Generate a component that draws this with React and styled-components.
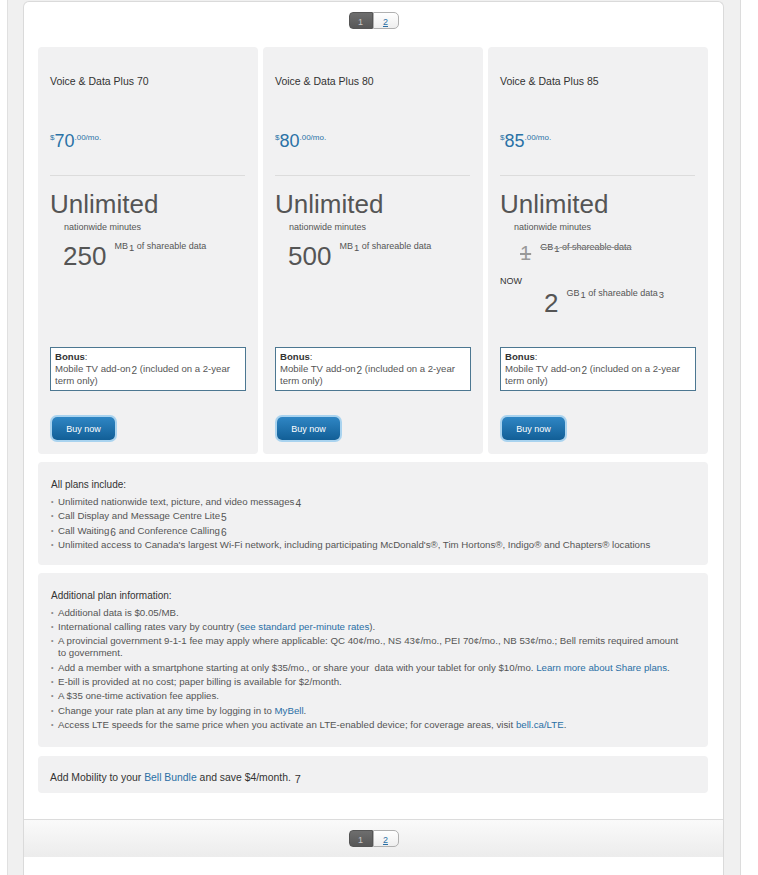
import React from 'react';
import styled, { createGlobalStyle } from 'styled-components';

const GlobalStyle = createGlobalStyle`
    html, body {
        margin: 0;
        padding: 0;
        background: #fff;
        font-family: 'Liberation Sans', Arial, sans-serif;
        color: #555;
    }
`;

const plans = [
    { name: 'Voice & Data Plus 70', price: '70', data: '250', unit: 'MB' },
    { name: 'Voice & Data Plus 80', price: '80', data: '500', unit: 'MB' },
    { name: 'Voice & Data Plus 85', price: '85', data: '2', unit: 'GB', was: '1' },
];

const Pager = () => (
    <PagerWrap>
        <PageBtn active>1</PageBtn>
        <PageBtn>2</PageBtn>
    </PagerWrap>
);

const PlanCard = ({ plan }) => (
    <Card>
        <PlanName>{plan.name}</PlanName>
        <Price>
            <Small>$</Small>
            <Big>{plan.price}</Big>
            <Small>.00/mo.</Small>
        </Price>
        <Divider />
        <Unlimited>Unlimited</Unlimited>
        <Minutes>nationwide minutes</Minutes>
        {plan.was ? (
            <>
                <DataRow indent={20} gap={5} struck>
                    <DataNum small>{plan.was}</DataNum>
                    <DataText>GB<Foot>1</Foot> of shareable data</DataText>
                </DataRow>
                <Now>NOW</Now>
                <DataRow indent={44} gap={-3}>
                    <DataNum>{plan.data}</DataNum>
                    <DataText>GB<Foot>1</Foot> of shareable data<Foot>3</Foot></DataText>
                </DataRow>
            </>
        ) : (
            <DataRow indent={13} gap={4}>
                <DataNum>{plan.data}</DataNum>
                <DataText>{plan.unit}<Foot>1</Foot> of shareable data</DataText>
            </DataRow>
        )}
        <Bonus>
            <strong>Bonus</strong>:<br />
            Mobile TV add-on<Foot>2</Foot> (included on a 2-year term only)
        </Bonus>
        <BuyNow>Buy now</BuyNow>
    </Card>
);

export default function App() {
    return (
        <>
            <GlobalStyle />
            <Frame>
                <Panel>
                    <Pager />
                    <Content>
                        <Cards>
                            {plans.map(p => <PlanCard key={p.name} plan={p} />)}
                        </Cards>
                        <InfoBox>
                            <InfoTitle>All plans include:</InfoTitle>
                            <List>
                                <li>Unlimited nationwide text, picture, and video messages<Foot>4</Foot></li>
                                <li>Call Display and Message Centre Lite<Foot>5</Foot></li>
                                <li>Call Waiting<Foot>6</Foot> and Conference Calling<Foot>6</Foot></li>
                                <li>Unlimited access to Canada's largest Wi-Fi network, including participating McDonald's®, Tim Hortons®, Indigo® and Chapters® locations</li>
                            </List>
                        </InfoBox>
                        <InfoBox tall>
                            <InfoTitle>Additional plan information:</InfoTitle>
                            <List>
                                <li>Additional data is $0.05/MB.</li>
                                <li>International calling rates vary by country (<Link>see standard per-minute rates</Link>).</li>
                                <li>A provincial government 9-1-1 fee may apply where applicable: QC 40¢/mo., NS 43¢/mo., PEI 70¢/mo., NB 53¢/mo.; Bell remits required amount to government.</li>
                                <li>Add a member with a smartphone starting at only $35/mo., or share your&nbsp; data with your tablet for only $10/mo. <Link>Learn more about Share plans</Link>.</li>
                                <li>E-bill is provided at no cost; paper billing is available for $2/month.</li>
                                <li>A $35 one-time activation fee applies.</li>
                                <li>Change your rate plan at any time by logging in to <Link>MyBell</Link>.</li>
                                <li>Access LTE speeds for the same price when you activate an LTE-enabled device; for coverage areas, visit <Link>bell.ca/LTE</Link>.</li>
                            </List>
                        </InfoBox>
                        <BundleBox>
                            Add Mobility to your <Link>Bell Bundle</Link> and save $4/month. <Foot>7</Foot>
                        </BundleBox>
                    </Content>
                    <FooterBar>
                        <Pager />
                    </FooterBar>
                </Panel>
            </Frame>
        </>
    );
}

const Frame = styled.div`
    margin-left: 7px;
    width: 734px;
    height: 875px;
    box-sizing: border-box;
    background: #f0f0f0;
    border-left: 1px solid #e0e0e0;
    border-right: 1px solid #dcdcdc;
    padding: 1px 16px 0 15px;
    display: flex;
`;

const Panel = styled.div`
    flex: 1;
    background: #fff;
    border: 1px solid #dadada;
    border-bottom: none;
    border-radius: 6px 6px 0 0;
    display: flex;
    flex-direction: column;
`;

const PagerWrap = styled.div`
    display: flex;
    justify-content: center;
    padding-top: 10px;
    height: 17px;
`;

const PageBtn = styled.span`
    display: flex;
    align-items: flex-end;
    justify-content: center;
    width: ${p => (p.active ? '24px' : '26px')};
    height: 17px;
    box-sizing: border-box;
    padding-bottom: 1px;
    font-size: 9px;
    color: ${p => (p.active ? '#c8c8c8' : '#2a6fa5')};
    background: ${p => (p.active ? 'linear-gradient(#6e6e6e, #575757)' : 'linear-gradient(#fff, #eee)')};
    border: 1px solid ${p => (p.active ? '#555' : '#b0b0b0')};
    border-radius: ${p => (p.active ? '4px 0 0 4px' : '0 5px 5px 0')};
    text-decoration: ${p => (p.active ? 'none' : 'underline')};
`;

const Content = styled.div`
    padding: 18px 15px 0 14px;
`;

const Cards = styled.div`
    display: grid;
    grid-template-columns: repeat(3, 220px);
    gap: 5px;
`;

const Card = styled.div`
    height: 407px;
    box-sizing: border-box;
    background: #f1f1f2;
    border-radius: 4px;
    padding: 28px 12px 14px 12px;
    display: flex;
    flex-direction: column;
`;

const PlanName = styled.div`
    font-size: 10.5px;
    line-height: 13px;
    color: #333;
`;

const Price = styled.div`
    margin-top: 40px;
    color: #2a72a6;
    line-height: 20px;
    height: 20px;
`;

const Small = styled.span`
    font-size: 8px;
    vertical-align: 7px;
`;

const Big = styled.span`
    font-size: 18px;
`;

const Divider = styled.div`
    margin-top: 27px;
    border-top: 1px solid #dcdcdc;
    width: 195px;
`;

const Unlimited = styled.div`
    margin-top: 13px;
    font-size: 26px;
    line-height: 30px;
    color: #555;
`;

const Minutes = styled.div`
    margin-left: 14px;
    margin-top: 2px;
    font-size: 9px;
    line-height: 12px;
    color: #555;
`;

const DataRow = styled.div`
    display: flex;
    align-items: flex-start;
    margin-left: ${p => p.indent}px;
    margin-top: ${p => p.gap}px;
    color: ${p => (p.struck ? '#999' : '#555')};
    text-decoration: ${p => (p.struck ? 'line-through' : 'none')};
`;

const DataNum = styled.span`
    font-size: ${p => (p.small ? '20px' : '26px')};
    line-height: 30px;
    margin-top: ${p => (p.small ? '0' : '4px')};
    margin-right: ${p => (p.small ? '9px' : '8px')};
`;

const DataText = styled.span`
    font-size: 9px;
    line-height: 12px;
    margin-top: 3px;
    color: #555;
`;

const Now = styled.div`
    font-size: 9px;
    line-height: 12px;
    color: #333;
    margin-top: 7px;
`;

const Foot = styled.span`
    font-size: 1.05em;
    line-height: 0;
    vertical-align: -0.2em;
    margin-left: 1px;
`;

const Bonus = styled.div`
    margin-top: auto;
    background: #fff;
    border: 1px solid #4c7791;
    padding: 3px 4px 3px 4px;
    font-size: 9.6px;
    line-height: 12px;
    color: #555;

    strong {
        color: #333;
        font-weight: bold;
    }
`;

const BuyNow = styled.div`
    margin-top: 26px;
    margin-left: 2px;
    width: 63px;
    height: 23px;
    display: flex;
    align-items: center;
    justify-content: center;
    font-size: 9px;
    color: #fff;
    background: linear-gradient(#2f86c4, #125f97);
    border-radius: 5px;
    box-shadow: 0 0 0 2px #a9d3ef;
`;

const InfoBox = styled.div`
    margin-top: 8px;
    background: #f1f1f2;
    border-radius: 4px;
    padding: 16px 13px ${p => (p.tall ? '16px' : '14px')} 13px;
`;

const InfoTitle = styled.div`
    font-size: 10px;
    line-height: 13px;
    color: #333;
    margin-bottom: 5px;
`;

const List = styled.ul`
    list-style: none;
    margin: 0;
    padding: 0 8px 0 7px;
    font-size: 9.7px;
    line-height: 12px;
    color: #555;

    li {
        position: relative;
        margin-bottom: 2.3px;
    }

    li:last-child {
        margin-bottom: 0;
    }

    li::before {
        content: '•';
        position: absolute;
        left: -7px;
        font-size: 7px;
        color: #888;
    }
`;

const Link = styled.span`
    color: #2a6fa5;
`;

const BundleBox = styled.div`
    margin-top: 9px;
    background: #f1f1f2;
    border-radius: 4px;
    padding: 16px 12px 10px 12px;
    font-size: 10.4px;
    line-height: 11px;
    color: #333;
`;

const FooterBar = styled.div`
    margin-top: 26px;
    height: 37px;
    border-top: 1px solid #dcdcdc;
    background: linear-gradient(#fafafa, #ececec);
`;
